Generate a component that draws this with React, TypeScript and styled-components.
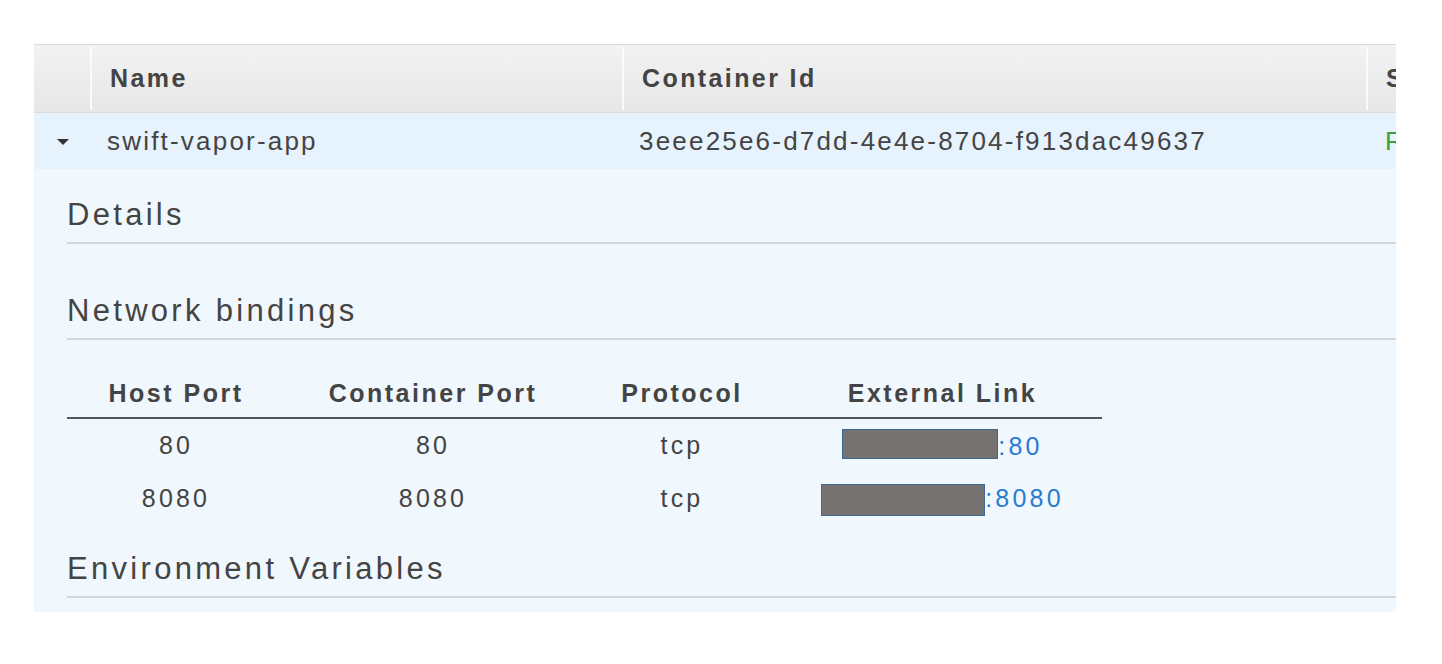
import React from "react";
import styled, { createGlobalStyle } from "styled-components";

const GlobalStyle = createGlobalStyle`
  html, body { margin: 0; padding: 0; background: #ffffff; }
  body { font-family: "Liberation Sans", Arial, Helvetica, sans-serif; color: #444; }
`;

const Page = styled.div`
  padding: 44px 0 0 34px;
  width: 1442px;
  height: 664px;
  box-sizing: border-box;
`;

const Panel = styled.div`
  width: 1362px;
  overflow: hidden;
`;

const COLS = "56px 532px 744px 200px";

const HeaderRow = styled.div`
  display: grid;
  grid-template-columns: ${COLS};
  height: 69px;
  box-sizing: border-box;
  padding: 2px 0;
  border-top: 1px solid #dadada;
  border-bottom: 1px solid #dcdcdc;
  background: linear-gradient(#f2f2f2, #e7e7e7);
`;

const HeadCell = styled.div<{ $sep?: boolean }>`
  display: flex;
  align-items: center;
  padding-left: ${(p) => (p.$sep ? "18px" : "0")};
  border-left: ${(p) => (p.$sep ? "2px solid #fbfbfb" : "none")};
  font-size: 25px;
  font-weight: 700;
  letter-spacing: 2.4px;
  color: #444;
  white-space: nowrap;
`;

const DataRow = styled.div`
  display: grid;
  grid-template-columns: ${COLS};
  height: 56px;
  background: #e6f2fc;
`;

const DataCell = styled.div<{ $status?: boolean }>`
  display: flex;
  align-items: center;
  padding-left: ${(p) => (p.$status ? "19px" : "17px")};
  font-size: 26px;
  letter-spacing: 2.2px;
  color: ${(p) => (p.$status ? "#39a03a" : "#444")};
  white-space: nowrap;
`;

const ToggleCell = styled.div`
  display: flex;
  align-items: center;
  justify-content: center;
  padding-left: 2px;
`;

const Caret = styled.span`
  width: 0;
  height: 0;
  border-left: 6.5px solid transparent;
  border-right: 6.5px solid transparent;
  border-top: 6px solid #333;
  margin-top: 2px;
`;

const Details = styled.div`
  display: flow-root;
  background: #f0f7fd;
  padding: 0 0 14px 33px;
`;

const SectionTitle = styled.h3<{ $gap: number }>`
  margin: ${(p) => p.$gap}px 0 0;
  font-size: 31px;
  font-weight: 400;
  line-height: 34px;
  letter-spacing: 3.3px;
  color: #444;
  padding-bottom: 10px;
  border-bottom: 2px solid #d3d7da;
`;

const BindingsTable = styled.table`
  margin-top: 39px;
  width: 1035px;
  border-collapse: collapse;
  table-layout: fixed;
`;

const HeadTh = styled.th`
  padding: 0 0 10px;
  line-height: 28px;
  font-size: 25px;
  font-weight: 700;
  letter-spacing: 2.5px;
  color: #444;
  text-align: center;
  border-bottom: 2px solid #555;
`;

const Td = styled.td`
  height: 53px;
  padding: 0;
  font-size: 25px;
  letter-spacing: 3.2px;
  color: #444;
  text-align: center;
  vertical-align: middle;
  white-space: nowrap;
`;

const LinkText = styled.span`
  color: #2a7bd2;
  vertical-align: middle;
`;

const Redacted = styled.span<{ $w: number; $h: number; $dy: number }>`
  display: inline-block;
  box-sizing: border-box;
  width: ${(p) => p.$w}px;
  height: ${(p) => p.$h}px;
  background: #767272;
  border: 1.5px solid #3c6a95;
  vertical-align: middle;
  position: relative;
  top: ${(p) => p.$dy}px;
`;

const bindings = [
  { host: "80", container: "80", protocol: "tcp", port: ":80", w: 156, h: 30, dy: -2 },
  { host: "8080", container: "8080", protocol: "tcp", port: ":8080", w: 164, h: 32, dy: 1 },
];

export default function App() {
  return (
    <>
      <GlobalStyle />
      <Page>
        <Panel>
          <HeaderRow>
            <HeadCell />
            <HeadCell $sep>Name</HeadCell>
            <HeadCell $sep>Container Id</HeadCell>
            <HeadCell $sep>Status</HeadCell>
          </HeaderRow>
          <DataRow>
            <ToggleCell>
              <Caret />
            </ToggleCell>
            <DataCell>swift-vapor-app</DataCell>
            <DataCell>3eee25e6-d7dd-4e4e-8704-f913dac49637</DataCell>
            <DataCell $status>RUNNING</DataCell>
          </DataRow>
          <Details>
            <SectionTitle $gap={29}>Details</SectionTitle>
            <SectionTitle $gap={50}>Network bindings</SectionTitle>
            <BindingsTable>
              <colgroup>
                <col style={{ width: 218 }} />
                <col style={{ width: 296 }} />
                <col style={{ width: 202 }} />
                <col style={{ width: 319 }} />
              </colgroup>
              <thead>
                <tr>
                  <HeadTh>Host Port</HeadTh>
                  <HeadTh>Container Port</HeadTh>
                  <HeadTh>Protocol</HeadTh>
                  <HeadTh>External Link</HeadTh>
                </tr>
              </thead>
              <tbody>
                {bindings.map((b) => (
                  <tr key={b.host}>
                    <Td>{b.host}</Td>
                    <Td>{b.container}</Td>
                    <Td>{b.protocol}</Td>
                    <Td>
                      <Redacted $w={b.w} $h={b.h} $dy={b.dy} />
                      <LinkText>{b.port}</LinkText>
                    </Td>
                  </tr>
                ))}
              </tbody>
            </BindingsTable>
            <SectionTitle $gap={27}>Environment Variables</SectionTitle>
          </Details>
        </Panel>
      </Page>
    </>
  );
}
